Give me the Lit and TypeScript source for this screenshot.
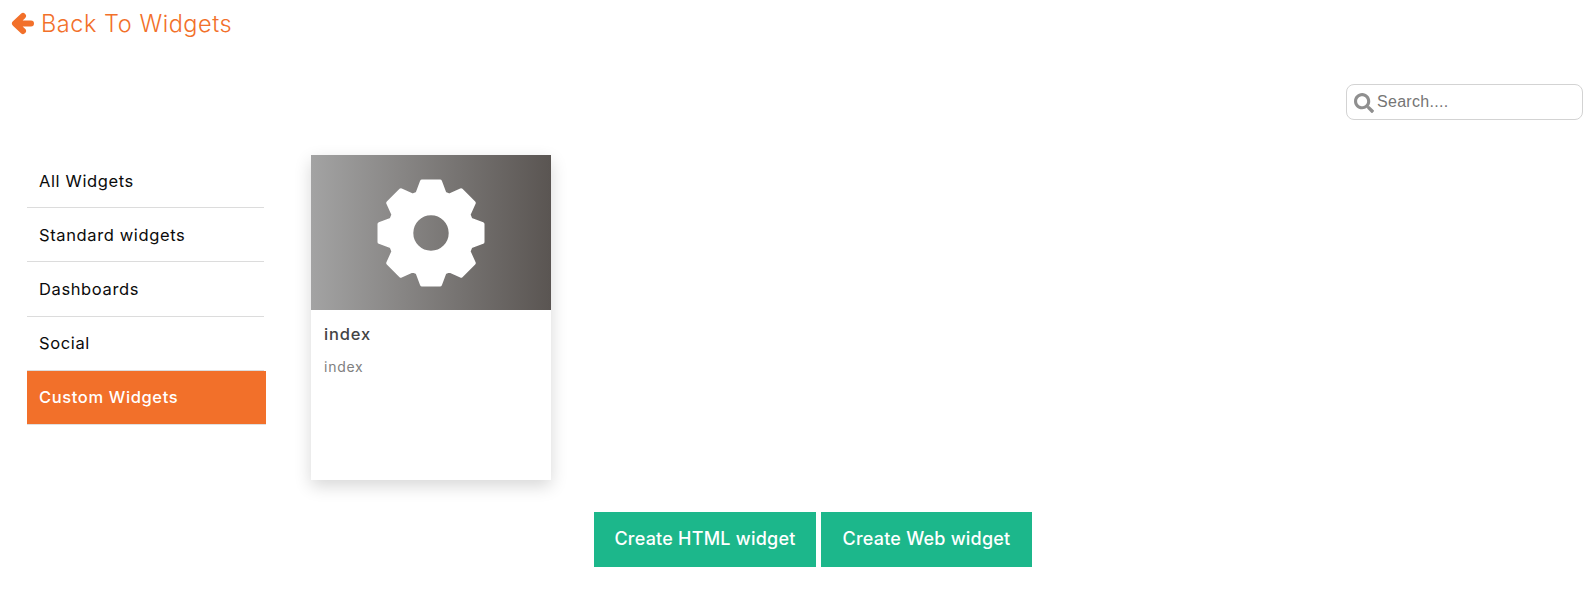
import { LitElement, html, css, svg } from "lit";
import { customElement } from "lit/decorators.js";

function gearPath(): string {
  const pts: string[] = [];
  for (let i = 0; i < 8; i++) {
    const a = (i * Math.PI) / 4;
    const local: [number, number][] = [
      [-13.5, -39.5],
      [-9, -51.5],
      [9, -51.5],
      [13.5, -39.5],
    ];
    for (const [x, y] of local) {
      const px = x * Math.cos(a) - y * Math.sin(a);
      const py = x * Math.sin(a) + y * Math.cos(a);
      pts.push(`${px.toFixed(2)} ${py.toFixed(2)}`);
    }
  }
  const hole = 19.7;
  return "M" + pts.join("L") + `ZM${hole} 0A${hole} ${hole} 0 1 0 -${hole} 0A${hole} ${hole} 0 1 0 ${hole} 0Z`;
}

const ITEMS = ["All Widgets", "Standard widgets", "Dashboards", "Social", "Custom Widgets"];

@customElement("app-root")
export class AppRoot extends LitElement {
  static styles = css`
    :host {
      display: block;
      width: 1590px;
      height: 599px;
      background: #fff;
      font-family: Inter, "Noto Sans", sans-serif;
      overflow: hidden;
    }
    .back {
      display: flex;
      align-items: center;
      gap: 7px;
      height: 24px;
      padding: 11px 0 1px 11px;
      color: #f2702a;
      font-size: 23.5px;
      font-weight: 300;
      letter-spacing: 0.55px;
    }
    .back svg { width: 23px; height: 23px; flex: none; }
    .search-row {
      display: flex;
      justify-content: flex-end;
      padding: 48px 7px 0 0;
    }
    .search {
      box-sizing: border-box;
      width: 237px;
      height: 36px;
      border: 1px solid #d3d3d3;
      border-radius: 8px;
      display: flex;
      align-items: center;
      gap: 3px;
      padding-left: 7px;
      font-family: "Liberation Sans", sans-serif;
      font-size: 16px;
      letter-spacing: 0.3px;
      color: #757575;
    }
    .search svg { width: 20px; height: 20px; flex: none; margin-top: 2px; }
    .main {
      display: flex;
      padding: 35px 0 0 27px;
    }
    .side {
      width: 239px;
      flex: none;
      margin-right: 45px;
    }
    .item {
      box-sizing: border-box;
      height: 54.25px;
      width: 237px;
      padding: 0 12px;
      display: flex;
      align-items: center;
      font-size: 16.5px;
      letter-spacing: 0.62px;
      color: #0b0b0b;
      border-bottom: 1px solid #dcdcdc;
    }
    .item:first-child { height: 53px; }
    .item.active {
      width: 239px;
      background: #f2702a;
      color: #fff;
      font-weight: 500;
      border-bottom-color: #e0e0e0;
    }
    .card {
      width: 240px;
      height: 325px;
      box-shadow: 0 6px 16px rgba(0, 0, 0, 0.16);
      background: #fff;
    }
    .thumb {
      height: 155px;
      background: linear-gradient(90deg, #a3a3a3, #5a5552);
      display: flex;
      align-items: center;
      justify-content: center;
    }
    .thumb svg { width: 110px; height: 110px; }
    .title {
      padding: 14px 13px 0;
      font-size: 16.5px;
      line-height: 20px;
      font-weight: 500;
      letter-spacing: 0.85px;
      color: #444;
    }
    .desc {
      padding: 14px 13px 0;
      font-size: 14px;
      line-height: 18px;
      letter-spacing: 0.75px;
      color: #808080;
    }
    .actions {
      display: flex;
      gap: 5px;
      padding: 32px 0 0 594px;
    }
    .btn {
      box-sizing: border-box;
      height: 55px;
      padding-bottom: 2px;
      display: flex;
      align-items: center;
      justify-content: center;
      background: #1cb78b;
      color: #fff;
      font-size: 18px;
      font-weight: 500;
      letter-spacing: 0.22px;
    }
    .b1 { width: 222px; }
    .b2 { width: 211px; }
  `;

  render() {
    return html`
      <div class="back">
        <svg viewBox="0 0 23 23"><path fill="none" stroke="currentColor" stroke-width="6" stroke-linecap="round" stroke-linejoin="round" d="M20 11.500H5M12 4L4 11.500L12 19"/></svg>
        <span>Back To Widgets</span>
      </div>
      <div class="search-row">
        <div class="search">
          <svg viewBox="0 0 512 512"><path fill="#8f8f8f" d="M505 442.700L405.300 343c-4.500-4.500-10.600-7-17-7H372c27.600-35.300 44-79.700 44-128C416 93.100 322.900 0 208 0S0 93.100 0 208s93.100 208 208 208c48.300 0 92.700-16.400 128-44v16.300c0 6.400 2.500 12.500 7 17l99.700 99.700c9.400 9.400 24.600 9.400 33.900 0l28.300-28.300c9.400-9.400 9.400-24.600.1-34zM208 336c-70.700 0-128-57.200-128-128 0-70.700 57.200-128 128-128 70.700 0 128 57.200 128 128 0 70.700-57.200 128-128 128z"/></svg>
          <span>Search....</span>
        </div>
      </div>
      <div class="main">
        <div class="side">
          ${ITEMS.map((t, i) => html`<div class="item ${i === 4 ? "active" : ""}">${t}</div>`)}
        </div>
        <div class="card">
          <div class="thumb">
            <svg viewBox="-55 -55 110 110">
              ${svg`<path fill="#fff" fill-rule="evenodd" stroke="#fff" stroke-width="4" stroke-linejoin="round" d="${gearPath()}"/>`}
            </svg>
          </div>
          <div class="title">index</div>
          <div class="desc">index</div>
        </div>
      </div>
      <div class="actions">
        <div class="btn b1">Create HTML widget</div>
        <div class="btn b2">Create Web widget</div>
      </div>
    `;
  }
}
